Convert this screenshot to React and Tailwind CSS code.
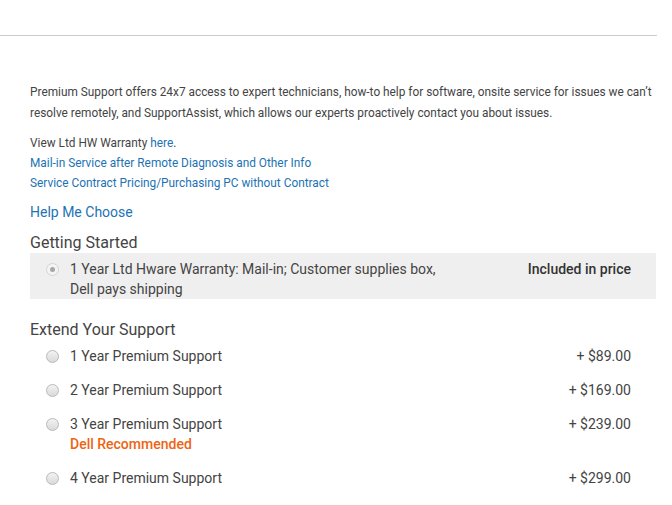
export default function App() {
  const options = [
    { label: "1 Year Premium Support", price: "+ $89.00" },
    { label: "2 Year Premium Support", price: "+ $169.00" },
    { label: "3 Year Premium Support", price: "+ $239.00", note: "Dell Recommended" },
    { label: "4 Year Premium Support", price: "+ $299.00" },
  ]

  return (
    <div className="min-h-screen w-[672px] bg-white font-['Roboto',sans-serif] text-[#444]">
      {/* top rule */}
      <div className="h-[36px] w-[657px] border-b border-[#cccccc]" />

      <div className="w-[656px] pl-[30px] pt-[46px]">
        <p className="w-[632px] text-[11.85px] leading-[21px]">
          Premium Support offers 24x7 access to expert technicians, how-to help for software, onsite service for issues we can’t resolve remotely, and SupportAssist, which allows our experts proactively contact you about issues.
        </p>

        <div className="mt-[9px] text-[11.85px] leading-[20px]">
          <div>
            View Ltd HW Warranty <a className="text-[#1d73b3]">here</a>.
          </div>
          <div className="text-[#1d73b3]">Mail-in Service after Remote Diagnosis and Other Info</div>
          <div className="text-[#1d73b3]">Service Contract Pricing/Purchasing PC without Contract</div>
        </div>

        <div className="mt-[9px] text-[14px] leading-[20px] text-[#1d73b3]">Help Me Choose</div>

        <h3 className="mt-[11px] text-[16px] leading-[20px]">Getting Started</h3>

        {/* included option */}
        <div className="flex items-start justify-between bg-[#efefef] pt-[6px] pb-0 pl-[16px] pr-[25px] text-[14px] leading-[20px]">
          <div className="flex items-start gap-[11px]">
            <span className="mt-[4px] flex h-[13px] w-[13px] shrink-0 items-center justify-center rounded-full border border-[#d4d4d4] bg-[#f4f4f4]">
              <span className="h-[5px] w-[5px] rounded-full bg-[#a8a8a8]" />
            </span>
            <span className="w-[380px]">1 Year Ltd Hware Warranty: Mail-in; Customer supplies box, Dell pays shipping</span>
          </div>
          <span className="font-medium text-[#333]">Included in price</span>
        </div>

        <h3 className="mt-[21px] text-[16px] leading-[20px]">Extend Your Support</h3>

        <div className="mt-[6px] flex flex-col gap-[14px] pr-[25px] text-[14px] leading-[20px]">
          {options.map((o) => (
            <div key={o.label} className="flex items-start justify-between pl-[16px]">
              <div className="flex items-start gap-[11px]">
                <span className="mt-[4px] h-[13px] w-[13px] shrink-0 rounded-full border border-[#b9b9b9] bg-gradient-to-b from-[#f3f3f3] to-[#d9d9d9]" />
                <div>
                  <div>{o.label}</div>
                  {o.note && <div className="font-medium text-[#ee6411]">{o.note}</div>}
                </div>
              </div>
              <span>{o.price}</span>
            </div>
          ))}
        </div>
      </div>
    </div>
  )
}
